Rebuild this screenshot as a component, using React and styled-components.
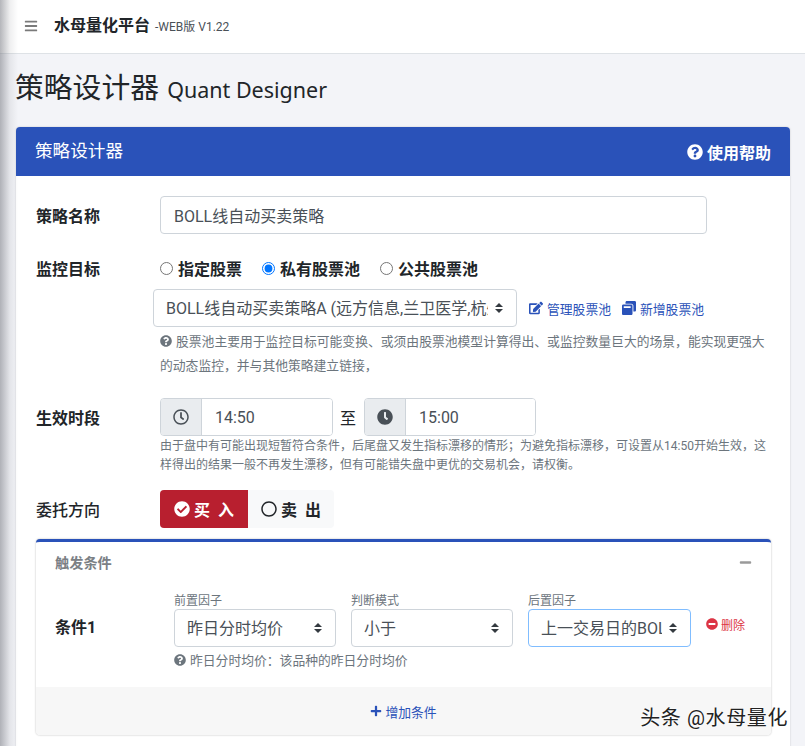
import styled, { createGlobalStyle } from "styled-components";
import {
  FaBars,
  FaCheckCircle,
  FaClock,
  FaEdit,
  FaMinus,
  FaMinusCircle,
  FaPlus,
  FaQuestionCircle,
  FaRegCircle,
  FaRegClock,
  FaWindowRestore,
} from "react-icons/fa";

const GlobalStyle = createGlobalStyle`
  html, body {
    margin: 0;
    height: 100%;
    overflow: hidden;
    background: #f3f4f8;
  }
  body, select, input {
    font-family: Roboto, "Noto Sans CJK SC", sans-serif;
  }
  * {
    box-sizing: border-box;
  }
`;

const Page = styled.div`
  position: relative;
  height: 746px;
  overflow: hidden;

  &::before {
    content: "";
    position: absolute;
    z-index: 5;
    top: 0;
    bottom: 0;
    left: 0;
    width: 18px;
    background: linear-gradient(to right, rgba(120, 122, 130, 0.55), rgba(120, 122, 130, 0.12) 55%, rgba(120, 122, 130, 0));
    pointer-events: none;
  }
`;

const TopBar = styled.header`
  display: flex;
  align-items: center;
  height: 54px;
  padding: 0 0 2px 24px;
  background: #fff;
  border-bottom: 1px solid #dee2e6;
  color: #7a7a7a;
  font-size: 15px;
`;

const Brand = styled.b`
  margin-left: 16px;
  color: #212529;
  font-size: 16px;
  line-height: 24px;
`;

const Version = styled.span`
  margin-left: 5px;
  color: #495057;
  font-size: 12px;
`;

const Main = styled.main`
  padding: 15px 15px 0 16px;
`;

const PageTitle = styled.h1`
  margin: 0 0 19px -1px;
  height: 39px;
  color: #212529;
  font-size: 28.8px;
  font-weight: 400;
  line-height: 39px;

  small {
    margin-left: 1px;
    font-family: "Noto Sans", sans-serif;
    font-size: 21.5px;
  }
`;

const Card = styled.section`
  background: #fff;
  border-radius: 4px;
  box-shadow: 0 0 2px rgba(0, 0, 0, 0.2);
`;

const CardHeader = styled.div`
  display: flex;
  justify-content: space-between;
  align-items: center;
  height: 49px;
  padding: 0 19px;
  background: #2a52b9;
  border-radius: 4px 4px 0 0;
  color: #fff;
`;

const HeaderTitle = styled.span`
  padding-bottom: 4px;
  font-size: 17.6px;
`;

const HelpLink = styled.b`
  display: flex;
  align-items: center;
  gap: 4px;
  font-size: 16px;
`;

const CardBody = styled.div`
  padding: 20px 19px 40px 20px;
`;

const Row = styled.div`
  display: flex;
  align-items: center;
  margin-bottom: ${(p) => p.$gap || 0}px;
`;

const Label = styled.label`
  flex: 0 0 124px;
  color: #212529;
  font-size: 16px;
  font-weight: ${(p) => p.$weight || 700};
`;

const TextInput = styled.input`
  width: 547px;
  height: 38px;
  padding: 0 13px;
  background: #fff;
  border: 1px solid #ced4da;
  border-radius: 4px;
  color: #495057;
  font-size: 16px;
  outline: none;
`;

const Radios = styled.div`
  display: flex;
  align-items: center;
  gap: 20px;
`;

const RadioLabel = styled.label`
  display: flex;
  align-items: center;
  color: #212529;
  font-size: 16px;
  font-weight: 700;

  input {
    width: 13px;
    height: 13px;
    margin: 0 5px 0 0;
  }
`;

const PoolRow = styled.div`
  display: flex;
  align-items: center;
  height: 38px;
  margin: 9px 0 0 117px;
`;

const Select = styled.select`
  appearance: none;
  display: block;
  width: ${(p) => p.$width}px;
  height: 38px;
  padding: 0 28px 0 12px;
  background: #fff url("data:image/svg+xml,%3csvg xmlns='http://www.w3.org/2000/svg' width='4' height='5' viewBox='0 0 4 5'%3e%3cpath fill='%23343a40' d='M2 0L0 2h4zm0 5L0 3h4z'/%3e%3c/svg%3e") no-repeat right 13px center / 8px 10px;
  border: 1px solid ${(p) => (p.$focused ? "#80bdff" : "#ced4da")};
  border-radius: 4px;
  color: #495057;
  font-size: 16px;
  outline: none;
`;

const PoolLink = styled.a`
  display: flex;
  align-items: center;
  gap: 4px;
  margin-left: ${(p) => p.$gap}px;
  color: #2a52b9;
  font-size: 12.8px;
`;

const Hint = styled.p`
  margin: ${(p) => p.$top || 0}px 0 ${(p) => p.$bottom || 0}px ${(p) => p.$left ?? 124}px;
  color: #6c757d;
  font-size: ${(p) => p.$size || 12.8}px;
  line-height: ${(p) => p.$line || 24}px;

  svg {
    margin-right: 4px;
    vertical-align: -1px;
  }
`;

const TimeGroup = styled.div`
  display: flex;
  width: ${(p) => p.$width}px;
  height: 38px;
  border: 1px solid #ced4da;
  border-radius: 4px;
  overflow: hidden;
`;

const TimeAddon = styled.span`
  display: flex;
  flex: 0 0 41px;
  align-items: center;
  justify-content: center;
  background: #e9ecef;
  border-right: 1px solid #ced4da;
  color: #495057;
  font-size: 16px;
`;

const TimeInput = styled.input`
  width: 130px;
  padding: 0 13px;
  border: 0;
  color: #495057;
  font-size: 16px;
  outline: none;
`;

const To = styled.span`
  margin: 0 8px 0 7px;
  color: #212529;
  font-size: 16px;
`;

const Direction = styled.div`
  display: flex;
  width: 174px;
  height: 38px;
  background: #f8f9fa;
  border-radius: 4px;
  overflow: hidden;
`;

const DirectionButton = styled.span`
  display: flex;
  flex: 0 0 ${(p) => (p.$active ? 88 : 86)}px;
  align-items: center;
  justify-content: center;
  gap: 4px;
  background: ${(p) => (p.$active ? "#b81f2f" : "transparent")};
  color: ${(p) => (p.$active ? "#fff" : "#212529")};
  font-size: 16px;
  font-weight: 700;
  white-space: pre;
`;

const ConditionCard = styled.div`
  margin-top: 11px;
  background: #fff;
  border-top: 3px solid #2a52b9;
  border-radius: 4px;
  box-shadow: 0 0 2px rgba(0, 0, 0, 0.3);
`;

const ConditionHeader = styled.div`
  display: flex;
  justify-content: space-between;
  align-items: center;
  height: 40px;
  padding: 0 19px;
  color: #7b8085;
  font-size: 14.2px;
  font-weight: 700;
`;

const ConditionBody = styled.div`
  display: flex;
  height: 105px;
  padding: 11px 0 0 19px;
`;

const ConditionName = styled.b`
  flex: 0 0 119px;
  margin-top: 16px;
  color: #212529;
  font-size: 16px;
  line-height: 38px;
`;

const Factors = styled.div`
  display: flex;
  flex-wrap: wrap;
  align-content: flex-start;
  gap: 0 15px;
  width: 517px;
`;

const Factor = styled.div`
  small {
    display: block;
    height: 16px;
    color: #6c757d;
    font-size: 12px;
    line-height: 16px;
  }
`;

const RemoveLink = styled.a`
  display: flex;
  align-items: center;
  gap: 3px;
  height: 14px;
  margin: 24px 0 0 15px;
  color: #dc3545;
  font-size: 12px;
  white-space: nowrap;
`;

const ConditionFooter = styled.div`
  display: flex;
  align-items: center;
  justify-content: center;
  gap: 3px;
  height: 48px;
  background: #f7f7f7;
  border-radius: 0 0 4px 4px;
  color: #2a52b9;
  font-size: 12.8px;
`;

const Watermark = styled.div`
  position: absolute;
  right: 17px;
  bottom: 16px;
  color: #222;
  font-size: 20px;
  letter-spacing: 0.6px;
  line-height: 24px;
  text-shadow: 0 0 2px #fff, 0 0 2px #fff;
`;

export default function App() {
  return (
    <Page>
      <GlobalStyle />
      <TopBar>
        <FaBars size={14} />
        <Brand>水母量化平台</Brand>
        <Version>-WEB版 V1.22</Version>
      </TopBar>
      <Main>
        <PageTitle>
          策略设计器 <small>Quant Designer</small>
        </PageTitle>
        <Card>
          <CardHeader>
            <HeaderTitle>策略设计器</HeaderTitle>
            <HelpLink>
              <FaQuestionCircle size={16} />
              使用帮助
            </HelpLink>
          </CardHeader>
          <CardBody>
            <Row $gap={22}>
              <Label>策略名称</Label>
              <TextInput defaultValue="BOLL线自动买卖策略" />
            </Row>
            <Row>
              <Label>监控目标</Label>
              <Radios>
                <RadioLabel>
                  <input type="radio" name="target" />
                  指定股票
                </RadioLabel>
                <RadioLabel>
                  <input type="radio" name="target" defaultChecked />
                  私有股票池
                </RadioLabel>
                <RadioLabel>
                  <input type="radio" name="target" />
                  公共股票池
                </RadioLabel>
              </Radios>
            </Row>
            <PoolRow>
              <Select $width={364}>
                <option>BOLL线自动买卖策略A (远方信息,兰卫医学,杭州高新,中科创达)</option>
              </Select>
              <PoolLink $gap={12}>
                <FaEdit size={14} />
                管理股票池
              </PoolLink>
              <PoolLink $gap={11}>
                <FaWindowRestore size={14} />
                新增股票池
              </PoolLink>
            </PoolRow>
            <Hint $top={3} $bottom={20}>
              <FaQuestionCircle size={12} />
              股票池主要用于监控目标可能变换、或须由股票池模型计算得出、或监控数量巨大的场景，能实现更强大的动态监控，并与其他策略建立链接，
            </Hint>
            <Row>
              <Label>生效时段</Label>
              <TimeGroup $width={173}>
                <TimeAddon>
                  <FaRegClock />
                </TimeAddon>
                <TimeInput defaultValue="14:50" />
              </TimeGroup>
              <To>至</To>
              <TimeGroup $width={172}>
                <TimeAddon>
                  <FaClock />
                </TimeAddon>
                <TimeInput defaultValue="15:00" />
              </TimeGroup>
            </Row>
            <Hint $top={1} $bottom={15} $line={19} $size={12}>
              由于盘中有可能出现短暂符合条件，后尾盘又发生指标漂移的情形；为避免指标漂移，可设置从14:50开始生效，这样得出的结果一般不再发生漂移，但有可能错失盘中更优的交易机会，请权衡。
            </Hint>
            <Row>
              <Label $weight={500}>委托方向</Label>
              <Direction>
                <DirectionButton $active>
                  <FaCheckCircle size={16} />
                  买  入
                </DirectionButton>
                <DirectionButton>
                  <FaRegCircle size={16} />
                  卖  出
                </DirectionButton>
              </Direction>
            </Row>
            <ConditionCard>
              <ConditionHeader>
                触发条件
                <FaMinus size={13} color="#9a9a9a" />
              </ConditionHeader>
              <ConditionBody>
                <ConditionName>条件1</ConditionName>
                <Factors>
                  <Factor>
                    <small>前置因子</small>
                    <Select $width={162}>
                      <option>昨日分时均价</option>
                    </Select>
                  </Factor>
                  <Factor>
                    <small>判断模式</small>
                    <Select $width={162}>
                      <option>小于</option>
                    </Select>
                  </Factor>
                  <Factor>
                    <small>后置因子</small>
                    <Select $width={163} $focused>
                      <option>上一交易日的BOLL上轨</option>
                    </Select>
                  </Factor>
                  <Hint $left={0} $top={2} $line={24}>
                    <FaQuestionCircle size={12} />
                    昨日分时均价：该品种的昨日分时均价
                  </Hint>
                </Factors>
                <RemoveLink>
                  <FaMinusCircle size={12} />
                  删除
                </RemoveLink>
              </ConditionBody>
              <ConditionFooter>
                <FaPlus size={12} />
                增加条件
              </ConditionFooter>
            </ConditionCard>
          </CardBody>
        </Card>
      </Main>
      <Watermark>头条 @水母量化</Watermark>
    </Page>
  );
}
